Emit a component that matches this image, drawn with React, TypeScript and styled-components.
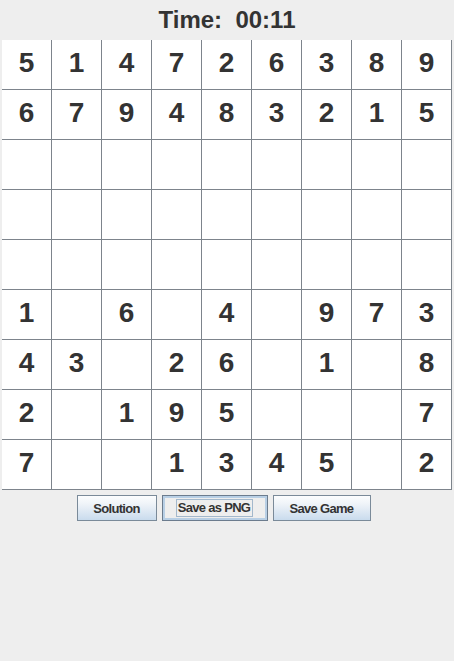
import styled, { createGlobalStyle } from "styled-components";

const GlobalStyle = createGlobalStyle`
  body, html, #root {
    margin: 0;
    padding: 0;
    width: 100%;
    height: 100%;
    background: #eeeeee;
  }
`;

const Window = styled.div`
  width: 454px;
  height: 661px;
  background: #eeeeee;
  font-family: "Liberation Sans", Arial, sans-serif;
`;

const Title = styled.div`
  height: 40px;
  display: flex;
  align-items: center;
  justify-content: center;
  font-size: 24px;
  font-weight: bold;
  color: #333333;
  white-space: pre;
`;

const Board = styled.div`
  margin-left: 2px;
  width: 450px;
  display: grid;
  grid-template-columns: repeat(9, 50px);
  grid-auto-rows: 50px;
  background: #ffffff;
`;

const Cell = styled.div`
  box-sizing: border-box;
  border-right: 1px solid #7d848c;
  border-bottom: 1px solid #7d848c;
  display: flex;
  align-items: center;
  justify-content: center;
  padding-bottom: 4px;
  font-size: 28px;
  font-weight: bold;
  color: #333333;
`;

const ButtonRow = styled.div`
  display: flex;
  justify-content: center;
  gap: 5px;
  padding: 5px 7px 0 0;
`;

const Button = styled.button<{ $focused?: boolean; $w: number }>`
  box-sizing: border-box;
  width: ${(p) => p.$w}px;
  height: 26px;
  padding: 0;
  font-family: "Liberation Sans", Arial, sans-serif;
  font-size: 13px;
  letter-spacing: -0.7px;
  font-weight: bold;
  color: #333333;
  border: 1px solid ${(p) => (p.$focused ? "#6c7c8e" : "#7a8a99")};
  background: ${(p) =>
    p.$focused
      ? "#eeeeee"
      : "linear-gradient(to bottom, #fcfdfe 0%, #eef3f8 35%, #c9dbed 100%)"};
  box-shadow: ${(p) => (p.$focused ? "inset 0 0 0 2px #b8cfe5" : "none")};
  display: flex;
  align-items: center;
  justify-content: center;
`;

const FocusLabel = styled.span`
  border: 1px solid #a3b8cc;
  padding: 0 2px 0 1px;
  line-height: 16px;
`;

const rows = [
  "514726389",
  "679483215",
  "         ",
  "         ",
  "         ",
  "1 6 4 973",
  "43 26 1 8",
  "2 195   7",
  "7  1345 2",
];

export default function App() {
  return (
    <Window>
      <GlobalStyle />
      <Title>Time:  00:11</Title>
      <Board>
        {rows.map((row, r) =>
          row.split("").map((ch, c) => (
            <Cell key={`${r}-${c}`}>{ch.trim()}</Cell>
          ))
        )}
      </Board>
      <ButtonRow>
        <Button $w={80}>Solution</Button>
        <Button $w={106} $focused>
          <FocusLabel>Save as PNG</FocusLabel>
        </Button>
        <Button $w={98}>Save Game</Button>
      </ButtonRow>
    </Window>
  );
}
